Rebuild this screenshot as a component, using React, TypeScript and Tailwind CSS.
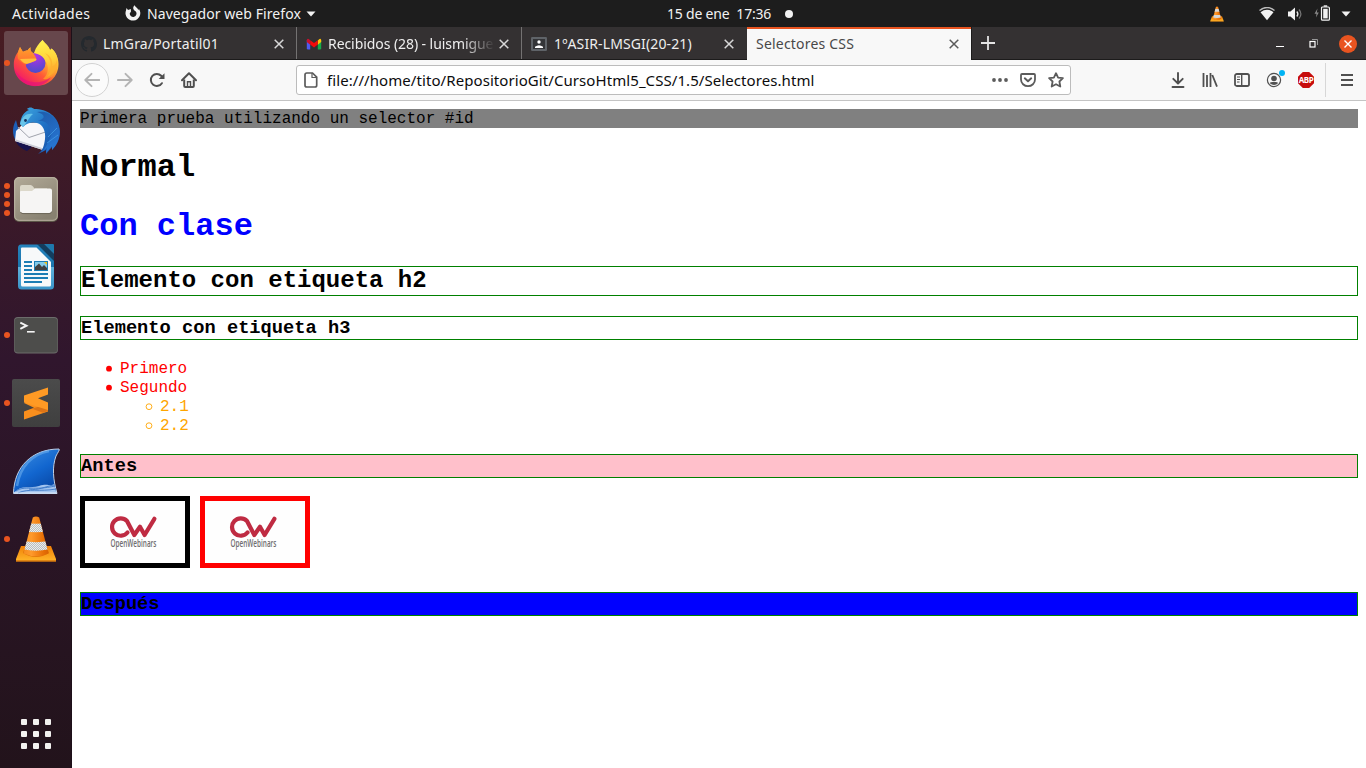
import type { ReactNode } from "react";

/* ---------- Dock icons ---------- */

function FirefoxIcon() {
  return (
    <svg width="48" height="48" viewBox="0 0 48 48">
      <defs>
        <linearGradient id="ffBody" x1="0.85" y1="0.1" x2="0.2" y2="0.95">
          <stop offset="0" stopColor="#fff44f" />
          <stop offset="0.35" stopColor="#ffb02e" />
          <stop offset="0.62" stopColor="#ff5a36" />
          <stop offset="1" stopColor="#f2136c" />
        </linearGradient>
        <radialGradient id="ffGlobe" cx="0.5" cy="0.15" r="0.9">
          <stop offset="0" stopColor="#b833e1" />
          <stop offset="0.5" stopColor="#7a3fd8" />
          <stop offset="1" stopColor="#4250c8" />
        </radialGradient>
        <linearGradient id="ffTail" x1="0.5" y1="0" x2="0.6" y2="1">
          <stop offset="0" stopColor="#fff44f" />
          <stop offset="0.5" stopColor="#ffd23a" />
          <stop offset="1" stopColor="#ff8a2a" />
        </linearGradient>
        <linearGradient id="ffHead" x1="0" y1="0" x2="0" y2="1">
          <stop offset="0" stopColor="#ffa22a" />
          <stop offset="1" stopColor="#ff6a32" />
        </linearGradient>
      </defs>
      <path d="M8 8 L11 13 C12 12 14 11.500 15.500 11.500 C16 10 18 8.500 18.500 8.200 C18 11 19 13 21 14 L30 14 C28 9 28 4 30.500 1 C34 5 37 7 38 11 L39.500 9.500 C44 13 46.500 19 46.500 25 C46.500 38 36.500 47 24 47 C11 47 1.800 38 1.800 25.500 C1.800 20 4 15.500 6 13 Z" fill="url(#ffBody)" />
      <circle cx="23.500" cy="24" r="10" fill="url(#ffGlobe)" />
      <path d="M22 14 C24 8 27 4 30.500 1 C32 5 37.500 7.500 38.500 13 L39.500 9.500 C45 14 46.500 21 45.500 28 C44 37 37 41 31 40 C37 35 37 27 33.500 22 C31 17 27 15 22 14 Z" fill="url(#ffTail)" />
      <path d="M33 14 C40 20 41 30 35 38 C42 36 46 29 45 20 C44 26 42 27 40 27 C41 21 38 16 33 14 Z" fill="#ffb02e" opacity="0.75" />
      <path d="M8 8 L11 13 C12 12 14 11.500 15.500 11.500 L18.500 8.200 C18 11 19 13 21 14 C23 17 25 19 24 21 C22 23 18 23 16 24 C14 27 11 25 6 20 C5 16 6.500 11 8 8 Z" fill="url(#ffHead)" />
      <path d="M8 20 L23 19.500 C25 19.500 25 21 23.500 21.800 L18 24 C14 26 11 24 8 20 Z" fill="#ffc13b" />
      <path d="M3 31 C10 43 26 48 39 38 C33 48 20 50 11 43 C7 40 4 35 3 31 Z" fill="#e3127b" opacity="0.65" />
    </svg>
  );
}

function ThunderbirdIcon() {
  return (
    <svg width="48" height="48" viewBox="0 0 48 48">
      <defs>
        <linearGradient id="tbBody" x1="0" y1="0" x2="1" y2="1">
          <stop offset="0" stopColor="#3fa9e0" />
          <stop offset="0.5" stopColor="#1f6fc4" />
          <stop offset="1" stopColor="#1a4aa0" />
        </linearGradient>
        <linearGradient id="tbWing" x1="0" y1="0" x2="0.5" y2="1">
          <stop offset="0" stopColor="#1b4f9e" />
          <stop offset="1" stopColor="#2a7ddb" />
        </linearGradient>
      </defs>
      <path d="M4 13 C0 20 0 28 4 34 L8 29 Z" fill="#1c5fb8" />
      <path d="M3 33 L20 40 L15 44 C10 42 5 38 3 33 Z" fill="#17134f" />
      <path d="M4 24 L12 16 L34 15 L36 42 L31 43 L3 34 Z" fill="#f6f6fa" />
      <path d="M6 20 L17 30.500 L35 24.500" fill="none" stroke="#a0a3ad" strokeWidth="1" />
      <path d="M3 34 L31 43 L30 41 L4 32.500 Z" fill="#c9cbd6" />
      <path d="M8 17 C9 9 12 5 17 3 L15 2 C17 0 20 0 22 2 C35 2 47 9 48 24 C48 32 45 38 40 43 L40 40 L34 47 L34 43 L26 47 C31 43 32 39 33 32 C34 25 31 17 25 16 C21 15 16 15 11 20 Z" fill="url(#tbBody)" />
      <path d="M24 14 C35 12 39 20 38 27 L40 26 C38 32 36 37 30 45 L35 41 L34 46 L40 39 L40 43 C49 34 50 20 43 12 C37 5 31 4 25 5 C33 7 35 12 24 14 Z" fill="url(#tbWing)" opacity="0.8" />
      <path d="M8 17 C10 9 15 6 21 7 C18 9 16 14 11 20 Z" fill="#67c4ea" />
      <circle cx="13.500" cy="13.500" r="1.400" fill="#12315f" />
      <path d="M36 30 L45 21 M35 36 L46 28" stroke="#49a5eb" strokeWidth="0.900" opacity="0.7" />
    </svg>
  );
}

function FilesIcon() {
  return (
    <svg width="48" height="48" viewBox="0 0 48 48">
      <defs>
        <linearGradient id="flTile" x1="0" y1="0" x2="0.6" y2="1">
          <stop offset="0" stopColor="#b2aa98" />
          <stop offset="1" stopColor="#888171" />
        </linearGradient>
      </defs>
      <rect x="2" y="2.500" width="44" height="44.500" rx="5" fill="#5c5648" />
      <rect x="2" y="2" width="44" height="44" rx="5" fill="url(#flTile)" />
      <rect x="2.700" y="2.700" width="42.600" height="42.600" rx="4.400" fill="none" stroke="#c6bfae" strokeWidth="1" opacity="0.7" />
      <path d="M8 15 V12 Q8 10 10 10 H18.500 Q20 10 21 11.500 L22.500 13.500 H35 V20 H8 Z" fill="#dcd8ca" />
      <path d="M8 17 Q8 16 9 16 H20 L23 13.500 H38 Q40 13.500 40 15.500 V35.500 Q40 38 37.500 38 H10.500 Q8 38 8 35.500 Z" fill="#f6f5f4" />
      <path d="M8.500 37 Q9 38.600 11 38.600 H37 Q39.500 38.600 39.800 36.500" fill="none" stroke="#6d6759" strokeWidth="1" />
    </svg>
  );
}

function WriterIcon() {
  return (
    <svg width="48" height="48" viewBox="0 0 48 48">
      <defs>
        <linearGradient id="wrEdge" x1="0" y1="0" x2="0" y2="1">
          <stop offset="0" stopColor="#2483bd" />
          <stop offset="0.49" stopColor="#1b75ac" />
          <stop offset="0.5" stopColor="#5fb2dc" />
          <stop offset="1" stopColor="#3994c8" />
        </linearGradient>
      </defs>
      <path d="M9 1.500 H27 L42 17 V43 Q42 46.500 38.500 46.500 H9.500 Q6 46.500 6 43 V5 Q6 1.500 9 1.500 Z" fill="url(#wrEdge)" />
      <path d="M10 4.500 H24.500 L39 19 V42 Q39 43.500 37.500 43.500 H10.500 Q9 43.500 9 42 V5.500 Q9 4.500 10 4.500 Z" fill="#f7f9fa" />
      <path d="M25 1 L42 18 V11 L32 1 Z" fill="#133d5e" />
      <path d="M32 1 H41 Q42 1 42 2 V11 Z" fill="#1e79ad" />
      <path d="M12 19 H20 M12 23 H20 M12 27 H20 M12 31 H36 M12 35 H36 M12 39 H30" stroke="#1c7db4" strokeWidth="2" />
      <rect x="22" y="18" width="14" height="10" fill="#1c7db4" />
      <rect x="23" y="19" width="12" height="8" fill="#83cbe9" />
      <path d="M23 27 V24 L27 20.500 L30 24 L32 22 L35 25 V27 Z" fill="#414141" />
      <path d="M32 19 H35 V22 Z" fill="#f5c211" />
    </svg>
  );
}

function TerminalIcon() {
  return (
    <svg width="48" height="48" viewBox="0 0 48 48">
      <rect x="2" y="6" width="44" height="36.500" rx="4" fill="#6c6c6b" />
      <rect x="2.500" y="7" width="43" height="34.500" rx="3.500" fill="#4d4d4b" />
      <path d="M8.300 11.700 L14.500 14.700 L8.300 17.800" fill="none" stroke="#f5f5f5" strokeWidth="1.900" />
      <path d="M15 20.800 H22.700" stroke="#f5f5f5" strokeWidth="1.600" />
    </svg>
  );
}

function SublimeIcon() {
  return (
    <svg width="48" height="48" viewBox="0 0 48 48">
      <defs>
        <linearGradient id="sbTile" x1="0" y1="0" x2="0" y2="1">
          <stop offset="0" stopColor="#4b4b4b" />
          <stop offset="1" stopColor="#3f3f3f" />
        </linearGradient>
      </defs>
      <rect width="48" height="48" rx="2" fill="url(#sbTile)" />
      <path d="M12 24 L22 21 L36 25.500 V32.500 L12 40.500 V32.500 L22 28.800 Z" fill="#f98f1d" />
      <path d="M20 29.700 L36 24.500 V32 L31 33.700 Z" fill="#dc7416" />
      <path d="M36 8.500 V15.500 L26 19.300 L36 23.500 V31 L12 23.500 V16.500 Z" fill="#ff9a24" />
    </svg>
  );
}

function WiresharkIcon() {
  return (
    <svg width="48" height="48" viewBox="0 0 48 48">
      <defs>
        <linearGradient id="wsFin" x1="0.2" y1="0" x2="0.8" y2="1">
          <stop offset="0" stopColor="#3889df" />
          <stop offset="0.5" stopColor="#1266cf" />
          <stop offset="1" stopColor="#07439f" />
        </linearGradient>
      </defs>
      <path d="M1.500 46.500 C2 20 20 2 47 2 C48 3 46 5 44 9 C40 20 41 32 45 46.500 Z" fill="url(#wsFin)" stroke="#c0cfe4" strokeWidth="1" />
      <path d="M5 39 C8 20 20 7 37 4" fill="none" stroke="#6aaeee" strokeWidth="2.500" opacity="0.6" />
      <path d="M2 45.500 C10 37 18 42 27 39 S38 40 42 37 L44.500 46.500 H2 Z" fill="#a4c5ef" />
      <path d="M4 44 C13 38 22 44 43 39 M6 46 C17 41 27 45 44 42 M17 42 C26 44 34 39 42 38" fill="none" stroke="#3c78c7" strokeWidth="0.900" />
      <path d="M2 46 H45" stroke="#e0eaf8" strokeWidth="1.200" />
    </svg>
  );
}

function VlcIcon({ size, id }: { size: number; id: string }) {
  return (
    <svg width={size} height={size} viewBox="0 0 48 48">
      <defs>
        <linearGradient id={`${id}-cone`} x1="0" y1="0" x2="1" y2="0">
          <stop offset="0" stopColor="#e77a08" />
          <stop offset="0.4" stopColor="#ff9a2c" />
          <stop offset="0.65" stopColor="#e87006" />
          <stop offset="1" stopColor="#b34700" />
        </linearGradient>
        <linearGradient id={`${id}-base`} x1="0" y1="0" x2="0" y2="1">
          <stop offset="0" stopColor="#f07f06" />
          <stop offset="1" stopColor="#ffb72a" />
        </linearGradient>
        <pattern id={`${id}-mesh`} width="2" height="2" patternUnits="userSpaceOnUse">
          <rect width="2" height="2" fill="#ebecec" />
          <rect width="1" height="1" fill="#b9bec0" />
          <rect x="1" y="1" width="1" height="1" fill="#b9bec0" />
        </pattern>
        <clipPath id={`${id}-clip`}>
          <path d="M20.800 2.500 Q24 0.500 27.200 2.500 L36.500 38.500 Q24 44 11.500 38.500 Z" />
        </clipPath>
      </defs>
      <path d="M9 31 H39 L44 44 V46.500 H4 V44 Z" fill={`url(#${id}-base)`} />
      <path d="M11 38 Q24 46 37 38 L36 35 H12 Z" fill="#d66300" opacity="0.7" />
      <g clipPath={`url(#${id}-clip)`}>
        <rect width="48" height="48" fill={`url(#${id}-cone)`} />
        <path d="M10 7.500 Q24 10 38 7.500 V15.500 Q24 19 10 15.500 Z" fill={`url(#${id}-mesh)`} />
        <path d="M8 25.500 Q24 29 40 25.500 V33.500 Q24 38 8 33.500 Z" fill={`url(#${id}-mesh)`} />
      </g>
      <path d="M4 46 H44" stroke="#c45b00" strokeWidth="1" />
    </svg>
  );
}

const dockItems: { name: string; dots: number; active?: boolean; icon: ReactNode }[] = [
  { name: "firefox", dots: 1, active: true, icon: <FirefoxIcon /> },
  { name: "thunderbird", dots: 0, icon: <ThunderbirdIcon /> },
  { name: "files", dots: 4, icon: <FilesIcon /> },
  { name: "writer", dots: 0, icon: <WriterIcon /> },
  { name: "terminal", dots: 1, icon: <TerminalIcon /> },
  { name: "sublime", dots: 1, icon: <SublimeIcon /> },
  { name: "wireshark", dots: 0, icon: <WiresharkIcon /> },
  { name: "vlc", dots: 1, icon: <VlcIcon size={48} id="dock-vlc" /> },
];

function Dock() {
  return (
    <nav className="flex w-[72px] shrink-0 flex-col justify-between border-r border-[#1d1019] bg-linear-to-b from-[#481c22] via-[#30162d] via-45% to-[#22131b] pt-1 pr-[3px] pb-[19px] pl-1">
      <div className="flex flex-col gap-1">
        {dockItems.map((item) => (
          <div
            key={item.name}
            className={`relative flex h-16 w-16 items-center justify-center rounded-[3px] ${item.active ? "bg-[#67474c]" : ""}`}
          >
            <div className="absolute top-0 left-0 flex h-full flex-col items-center justify-center gap-[3px]">
              {Array.from({ length: item.dots }, (_, i) => (
                <span key={i} className="h-1.5 w-1.5 rounded-full bg-[#e95420]" />
              ))}
            </div>
            {item.icon}
          </div>
        ))}
      </div>
      <div className="grid grid-cols-3 gap-1.5 self-center">
        {Array.from({ length: 9 }, (_, i) => (
          <span key={i} className="h-1.5 w-1.5 rounded-[1px] bg-[#f2f1ef]" />
        ))}
      </div>
    </nav>
  );
}

/* ---------- System bar ---------- */

function TopBar() {
  return (
    <header className="flex h-[27px] shrink-0 items-center bg-[#1d1d1d] text-[14px] leading-[27px] whitespace-pre text-[#f2f2f2]">
      <span className="w-[125px] shrink-0 pl-3 tracking-[0.32px]">Actividades</span>
      <svg width="16" height="16" viewBox="0 0 16 16" className="-mt-0.5 shrink-0">
        <path d="M1.500 3 L3 5 L5.800 4 L6 6.500 L4.700 8.500 A3.400 3.400 0 1 0 10.800 6.500 C8.500 5.500 7 3 9.500 0.300 C10.500 2.500 12.500 2.800 13.300 5 L14 4 A7.400 7.400 0 1 1 1 5.500 Z" fill="#f2f2f2" />
      </svg>
      <span className="w-[165px] shrink-0 pl-1.5 tracking-[0.08px]">Navegador web Firefox</span>
      <svg width="10" height="6" viewBox="0 0 10 6" className="shrink-0">
        <path d="M0.500 0.500 H9.500 L5 5.500 Z" fill="#f2f2f2" />
      </svg>
      <span className="ml-[351px] w-[118px] shrink-0 tracking-[-0.2px]">15 de ene  17:36</span>
      <span className="h-2 w-2 shrink-0 rounded-full bg-[#f2f2f2]" />
      <div className="ml-auto flex items-center pr-[15px]">
        <VlcIcon size={16} id="tray-vlc" />
        <svg width="16" height="14" viewBox="0 0 16 14" className="ml-[34px]">
          <path d="M0.500 3.500 Q8 -2.500 15.500 3.500" fill="none" stroke="#bbb" strokeWidth="1.400" />
          <path d="M1.500 5.200 Q8 0.500 14.500 5.200 L8 13.300 Z" fill="#f2f2f2" />
        </svg>
        <svg width="16" height="14" viewBox="0 0 16 14" className="ml-3">
          <path d="M1 4.500 H3.500 L8 0.500 V13.500 L3.500 9.500 H1 Z" fill="#f2f2f2" />
          <path d="M9.800 4.500 Q12 7 9.800 9.500" fill="none" stroke="#e5e5e5" strokeWidth="1.300" />
          <path d="M12 2.500 Q15.800 7 12 11.500" fill="none" stroke="#777" strokeWidth="1.200" />
        </svg>
        <svg width="16" height="16" viewBox="0 0 16 16" className="-mt-0.5 ml-[11px]">
          <path d="M3.500 3.500 L0.500 8.800 H2.500 L2 12.500 L4.800 7.500 H2.800 Z" fill="#8a8a8a" />
          <rect x="7.500" y="2" width="7.900" height="13.200" rx="1" fill="none" stroke="#f2f2f2" strokeWidth="1.200" />
          <rect x="9.200" y="3.800" width="4.500" height="9.600" fill="#f2f2f2" />
          <rect x="9.700" y="0.300" width="3.500" height="1.500" fill="#f2f2f2" />
        </svg>
        <svg width="10" height="6" viewBox="0 0 10 6" className="ml-[11px]">
          <path d="M0.500 0.500 H9.500 L5 5.500 Z" fill="#f2f2f2" />
        </svg>
      </div>
    </header>
  );
}

/* ---------- Browser tabs ---------- */

function CloseGlyph({ color }: { color: string }) {
  return (
    <svg width="10" height="10" viewBox="0 0 10 10" className="mt-px shrink-0">
      <path d="M0.700 0.700 L9.300 9.300 M9.300 0.700 L0.700 9.300" stroke={color} strokeWidth="1.500" />
    </svg>
  );
}

function GithubIcon() {
  return (
    <svg width="16" height="16" viewBox="0 0 16 16" className="mt-px shrink-0">
      <path
        fill="#24292e"
        d="M8 0C3.580 0 0 3.580 0 8c0 3.540 2.290 6.530 5.470 7.590.4.070.55-.17.55-.38 0-.19-.01-.82-.01-1.490-2.010.37-2.530-.49-2.690-.94-.09-.23-.48-.94-.82-1.130-.28-.15-.68-.52-.01-.53.63-.01 1.080.58 1.230.82.72 1.210 1.870.87 2.330.66.07-.52.28-.87.51-1.070-1.780-.2-3.640-.89-3.640-3.950 0-.87.31-1.590.82-2.150-.08-.2-.36-1.020.08-2.120 0 0 .67-.21 2.200.82.64-.18 1.320-.27 2-.27s1.360.09 2 .27c1.530-1.040 2.200-.82 2.200-.82.44 1.100.16 1.920.08 2.120.51.56.82 1.270.82 2.150 0 3.070-1.870 3.750-3.650 3.950.29.25.54.73.54 1.480 0 1.070-.01 1.930-.01 2.200 0 .21.15.46.55.38A8.010 8.010 0 0 0 16 8c0-4.420-3.580-8-8-8z"
      />
    </svg>
  );
}

function GmailIcon() {
  return (
    <svg width="16" height="16" viewBox="0 0 16 16" className="mt-px shrink-0">
      <path d="M0.800 4 L4.200 6.500 V13.500 H2 Q0.800 13.500 0.800 12.300 Z" fill="#4f5bf0" />
      <path d="M15.200 4 L11.800 6.500 V13.500 H14 Q15.200 13.500 15.200 12.300 Z" fill="#15ac4b" />
      <path d="M11.800 4.500 L13.500 3 Q15.200 2.200 15.200 4.500 V6 L11.800 8.700 Z" fill="#ffc107" />
      <path d="M4.200 4.200 L8 7.100 L11.800 4.200 V8.600 L8 11.500 L4.200 8.600 Z" fill="#f50a0a" />
      <path d="M0.800 6 V4.500 Q0.800 2.200 2.700 3 L4.200 4.200 V8.700 Z" fill="#c8102e" />
    </svg>
  );
}

function ClassroomIcon() {
  return (
    <svg width="16" height="14" viewBox="0 0 16 14" className="mt-px shrink-0">
      <rect width="16" height="14" rx="1.200" fill="#5f6368" />
      <rect x="2" y="2" width="12" height="10" fill="#343538" />
      <circle cx="8" cy="5" r="1.700" fill="#fff" />
      <path d="M4 11 V9.800 Q8 6.800 12 9.800 V11 Z" fill="#fff" />
    </svg>
  );
}

function TabStrip() {
  return (
    <div className="flex h-[33px] shrink-0 border-b border-[#1c1b1b] bg-[#343132] text-[14px] whitespace-nowrap text-[#eeeeee]">
      <div className="flex w-[225px] items-center border-r border-[#747272] pr-3 pl-[9px]">
        <GithubIcon />
        <span className="ml-1.5 flex-1 tracking-[0.17px]">LmGra/Portatil01</span>
        <CloseGlyph color="#d8d8d8" />
      </div>
      <div className="flex w-[225px] items-center border-r border-[#747272] pr-3 pl-[9px]">
        <GmailIcon />
        <span className="mr-1 ml-1.5 min-w-0 flex-1 mask-r-from-80% mask-r-to-100% tracking-[-0.07px]">
          Recibidos (28) - luismigue
        </span>
        <CloseGlyph color="#d8d8d8" />
      </div>
      <div className="flex w-[225px] items-center pr-[13px] pl-[9px]">
        <ClassroomIcon />
        <span className="ml-[7px] flex-1 tracking-[0.12px]">1ºASIR-LMSGI(20-21)</span>
        <CloseGlyph color="#d8d8d8" />
      </div>
      <div className="-mb-px flex w-[224px] items-center border-t-2 border-[#e95420] bg-[#f8f8f8] pr-3 pb-0.5 pl-[9px] text-[#484848]">
        <span className="flex-1 tracking-[0.2px]">Selectores CSS</span>
        <CloseGlyph color="#5a5a5a" />
      </div>
      <div className="flex flex-1 items-center border-l border-[#1c1b1b] pr-[9px] pl-[9px]">
        <svg width="14" height="14" viewBox="0 0 14 14">
          <path d="M7 0 V14 M0 7 H14" stroke="#e4e4e4" strokeWidth="1.800" />
        </svg>
        <div className="ml-auto flex items-center pt-px">
          <svg width="8" height="8" viewBox="0 0 8 8">
            <path d="M0 6.500 H8" stroke="#fff" strokeWidth="1" />
          </svg>
          <svg width="9" height="9" viewBox="0 0 9 9" className="ml-[25px]">
            <path d="M3 0.500 H8.500 V6" fill="none" stroke="#999" strokeWidth="1" />
            <rect x="1" y="2.500" width="5" height="5.500" fill="none" stroke="#fff" strokeWidth="1.200" />
          </svg>
          <svg width="18" height="18" viewBox="0 0 18 18" className="ml-[21px]">
            <circle cx="9" cy="9" r="9" fill="#e95420" />
            <path d="M5.500 5.500 L12.500 12.500 M12.500 5.500 L5.500 12.500" stroke="#fff" strokeWidth="1.400" />
          </svg>
        </div>
      </div>
    </div>
  );
}

/* ---------- Navigation bar ---------- */

function NavBar() {
  return (
    <div className="flex h-[41px] shrink-0 items-center border-b border-[#c4c4c4] bg-[#f8f8f8] pl-[3px]">
      <div className="flex h-[34px] w-[34px] items-center justify-center rounded-full border border-[#d2d2d2] bg-[#fbfbfb]">
        <svg width="16" height="16" viewBox="0 0 16 16">
          <path d="M15.500 8 H1.500 M7.500 1.800 L1.300 8 L7.500 14.200" fill="none" stroke="#b4b4b4" strokeWidth="1.900" strokeLinecap="round" strokeLinejoin="round" />
        </svg>
      </div>
      <svg width="16" height="16" viewBox="0 0 16 16" className="ml-2">
        <path d="M0.800 8 H14.500 M8.500 1.800 L14.700 8 L8.500 14.200" fill="none" stroke="#b4b4b4" strokeWidth="1.900" strokeLinecap="round" strokeLinejoin="round" />
      </svg>
      <svg width="16" height="16" viewBox="0 0 16 16" className="ml-4">
        <path d="M12.900 11.200 A6 6 0 1 1 12.200 3.800 L13.500 5.200" fill="none" stroke="#505050" strokeWidth="2" strokeLinecap="round" />
        <path d="M15.500 1.200 V7 H9.700 Z" fill="#505050" />
      </svg>
      <svg width="16" height="16" viewBox="0 0 16 16" className="ml-4">
        <path d="M1 8.300 L8 1.300 L15 8.300" fill="none" stroke="#505050" strokeWidth="2" strokeLinecap="round" strokeLinejoin="round" />
        <path d="M3.200 7.500 V14 Q3.200 15 4.200 15 H11.800 Q12.800 15 12.800 14 V7.500" fill="none" stroke="#505050" strokeWidth="2" />
        <path d="M6.500 15 V9.800 H9.500 V15" fill="none" stroke="#505050" strokeWidth="1.400" />
      </svg>

      <div className="ml-[99px] flex h-[30px] w-[775px] items-center rounded-[3px] border border-[#bcbcbc] bg-white pr-1.5 pl-[6px]">
        <svg width="16" height="16" viewBox="0 0 16 16">
          <path d="M3.800 1 H9.500 L13.700 5.200 V13.200 Q13.700 15 11.900 15 H3.800 Q2 15 2 13.200 V2.800 Q2 1 3.800 1 Z" fill="none" stroke="#5b5b5b" strokeWidth="1.700" />
          <path d="M9 1 V5.500 H13.700" fill="none" stroke="#5b5b5b" strokeWidth="1.200" />
        </svg>
        <span className="ml-2 flex-1 text-[15px] tracking-[0.075px] whitespace-nowrap text-[#0c0c0d]">
          file:///home/tito/RepositorioGit/CursoHtml5_CSS/1.5/Selectores.html
        </span>
        <svg width="16" height="4" viewBox="0 0 16 4">
          <circle cx="2" cy="2" r="1.900" fill="#5b5b5b" />
          <circle cx="8" cy="2" r="1.900" fill="#5b5b5b" />
          <circle cx="14" cy="2" r="1.900" fill="#5b5b5b" />
        </svg>
        <svg width="16" height="16" viewBox="0 0 16 16" className="ml-3">
          <path d="M2 2 H14 Q15 2 15 3 V7.500 A7 6.700 0 0 1 1 7.500 V3 Q1 2 2 2 Z" fill="none" stroke="#5b5b5b" strokeWidth="1.800" />
          <path d="M4.800 6.300 L8 9.300 L11.200 6.300" fill="none" stroke="#5b5b5b" strokeWidth="1.900" strokeLinecap="round" strokeLinejoin="round" />
        </svg>
        <svg width="16" height="16" viewBox="0 0 16 16" className="ml-3">
          <path d="M8 1.200 L10.100 5.600 L14.900 6.200 L11.400 9.500 L12.300 14.500 L8 12.200 L3.700 14.500 L4.600 9.500 L1.100 6.200 L5.900 5.600 Z" fill="none" stroke="#5b5b5b" strokeWidth="1.800" strokeLinejoin="round" />
        </svg>
      </div>

      <div className="ml-auto flex items-center gap-4 pr-[11px]">
        <svg width="16" height="16" viewBox="0 0 16 16">
          <path d="M8 1 V11 M3.300 6.800 L8 11.500 L12.700 6.800" fill="none" stroke="#505050" strokeWidth="1.900" strokeLinecap="round" strokeLinejoin="round" />
          <path d="M2.500 15 H13.500" stroke="#505050" strokeWidth="1.900" strokeLinecap="round" />
        </svg>
        <svg width="16" height="16" viewBox="0 0 16 16">
          <path d="M1.500 1 V15 M5 3 V15 M8.500 1 V15 M10.300 3 L15 14.700" fill="none" stroke="#505050" strokeWidth="1.800" />
        </svg>
        <svg width="16" height="16" viewBox="0 0 16 16">
          <rect x="1" y="2" width="14" height="12" rx="1.800" fill="none" stroke="#505050" strokeWidth="1.800" />
          <path d="M7.700 2 V14" stroke="#505050" strokeWidth="1.400" />
          <path d="M3 5 H6 M3 7.500 H6 M3 10 H5.500" stroke="#505050" strokeWidth="1" />
        </svg>
        <svg width="20" height="18" viewBox="0 0 20 18" className="-mr-1 overflow-visible">
          <circle cx="8" cy="9" r="6.600" fill="none" stroke="#505050" strokeWidth="1.200" />
          <circle cx="8" cy="7.500" r="2.800" fill="#505050" />
          <path d="M3.800 12 Q5 10.500 8 11 Q11 10.500 12.200 12 Q10.500 14 8 14 T3.800 12 Z" fill="#505050" />
          <circle cx="16" cy="2" r="3" fill="#00b3f4" />
        </svg>
        <div className="flex h-4 w-4 items-center justify-center bg-[#c70d0d] text-[8px] leading-none font-bold tracking-[-0.4px] text-white [clip-path:polygon(30%_0,70%_0,100%_30%,100%_70%,70%_100%,30%_100%,0_70%,0_30%)]">
          ABP
        </div>
        <div className="-ml-[5px] flex h-[34px] items-center border-l border-[#d7d7d7] pl-[14px]">
          <svg width="16" height="14" viewBox="0 0 16 14" className="-mr-[1px]">
            <path d="M1 2 H13 M1 7 H13 M1 12 H13" stroke="#505050" strokeWidth="2" />
          </svg>
        </div>
      </div>
    </div>
  );
}

/* ---------- Page ---------- */

function OpenWebinarsLogo({ border }: { border: string }) {
  return (
    <div className={`h-[72px] w-[110px] border-[5px] bg-[#fefefe] ${border}`}>
      <svg width="100" height="62" viewBox="0 0 100 62">
        <path d="M42.500 31.500 A8.700 8.700 0 1 1 42 20 L49.300 34 L55 25.800 L59.600 34 L69.400 17.800" fill="none" stroke="#bf2b42" strokeWidth="4.200" strokeLinecap="round" strokeLinejoin="round" />
        <text transform="translate(25.500 46) scale(1 1.220)" textLength="46" lengthAdjust="spacingAndGlyphs" fontFamily="Open Sans, sans-serif" fontSize="8" fontWeight="600" fill="#6f6d6f">
          OpenWebinars
        </text>
      </svg>
    </div>
  );
}

function ListItem({ hollow, children }: { hollow?: boolean; children: ReactNode }) {
  return (
    <li className="flex h-[19px] items-center leading-[21px]">
      <svg width="8" height="8" viewBox="0 0 8 8" className="mr-[7px]">
        {hollow ? (
          <circle cx="4" cy="3.700" r="2.900" fill="none" stroke="currentColor" strokeWidth="0.900" />
        ) : (
          <circle cx="4" cy="3.700" r="2.900" fill="currentColor" />
        )}
      </svg>
      <span className="pt-0.5">{children}</span>
    </li>
  );
}

function Page() {
  return (
    <main className="flex-1 bg-white p-2 font-['Liberation_Mono',monospace] text-[16px] leading-[19px] text-black">
      <div className="h-[19px] bg-[#808080] leading-[21px]">Primera prueba utilizando un selector #id</div>
      <h1 className="mt-[21px] text-[32px] leading-[37px] font-bold">Normal</h1>
      <h1 className="mt-[22px] text-[32px] leading-[37px] font-bold text-[#0000ff]">Con clase</h1>
      <h2 className="mt-[21px] h-[30px] border border-[#008000] text-[24px] leading-[28px] font-bold">
        Elemento con etiqueta h2
      </h2>
      <h3 className="mt-5 h-6 border border-[#008000] text-[18.72px] leading-[22px] font-bold">
        Elemento con etiqueta h3
      </h3>
      <ul className="mt-[19px] pl-[25px] text-[#ff0000]">
        <ListItem>Primero</ListItem>
        <ListItem>Segundo</ListItem>
        <li>
          <ul className="pl-10 text-[#ffa500]">
            <ListItem hollow>2.1</ListItem>
            <ListItem hollow>2.2</ListItem>
          </ul>
        </li>
      </ul>
      <h3 className="mt-[19px] h-6 border border-[#008000] bg-[#ffc0cb] text-[18.72px] leading-[22px] font-bold">
        Antes
      </h3>
      <div className="mt-[18px] flex gap-2.5">
        <OpenWebinarsLogo border="border-black" />
        <OpenWebinarsLogo border="border-[#ff0000]" />
      </div>
      <h3 className="mt-6 h-6 border border-[#008000] bg-[#0000ff] text-[18.72px] leading-[22px] font-bold">
        Después
      </h3>
    </main>
  );
}

export default function App() {
  return (
    <div className="flex h-[768px] w-[1366px] flex-col overflow-hidden font-['Noto_Sans','Open_Sans',sans-serif]">
      <TopBar />
      <div className="flex min-h-0 flex-1">
        <Dock />
        <div className="flex min-w-0 flex-1 flex-col">
          <TabStrip />
          <NavBar />
          <Page />
        </div>
      </div>
    </div>
  );
}
